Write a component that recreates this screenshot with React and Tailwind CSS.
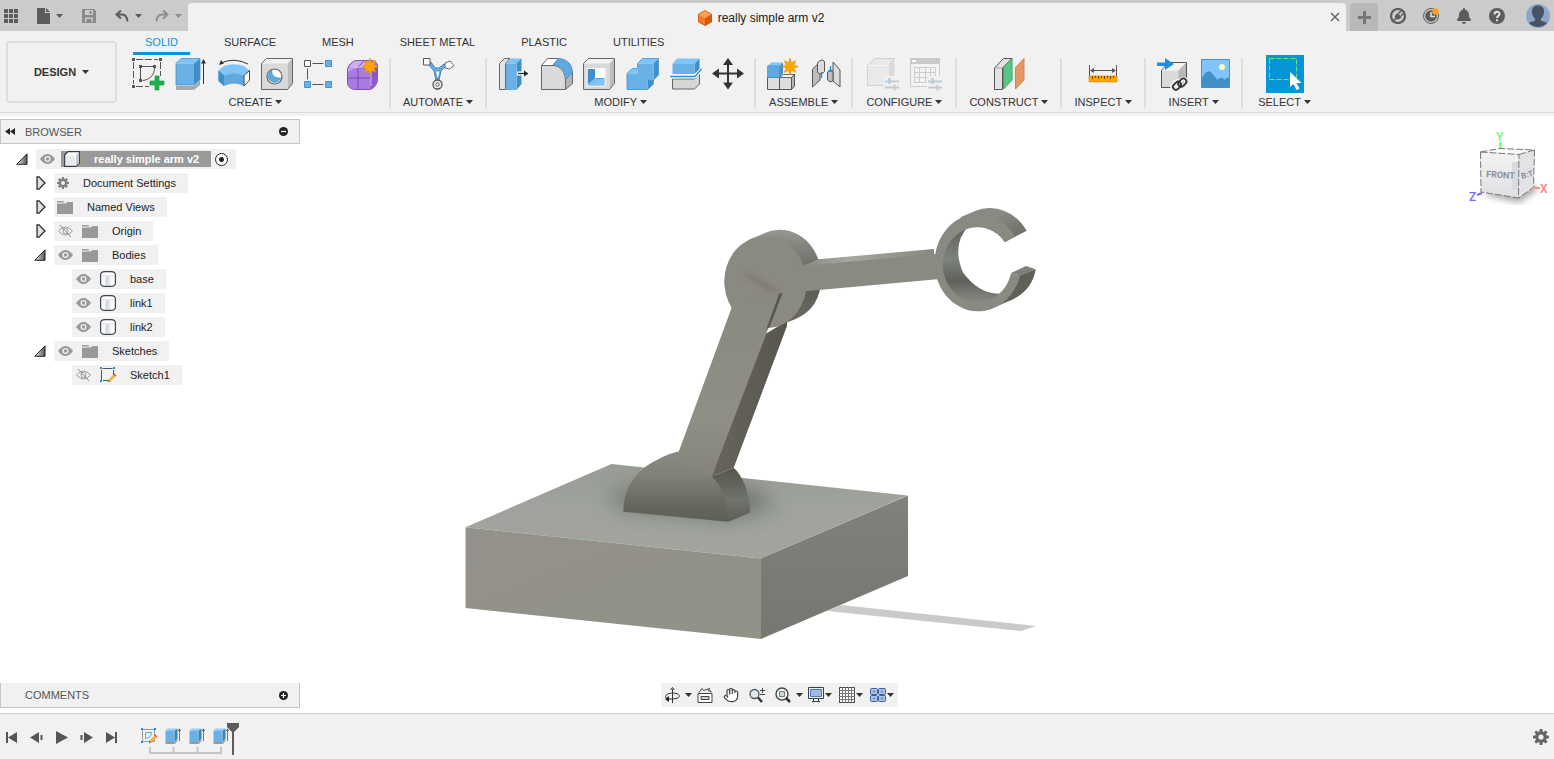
import React, { useState } from 'react';
import { FaBell } from 'react-icons/fa';
import { Hand } from 'lucide-react';

function Caret({ className = 'text-[#333]' }) {
  return (
    <svg className={`w-[7px] h-1 shrink-0 ${className}`} viewBox="0 0 7 4" aria-hidden="true">
      <path d="M0 0h7L3.5 4z" fill="currentColor" />
    </svg>
  );
}

function Gear({ className }) {
  return (
    <svg className={`shrink-0 ${className}`} viewBox="0 0 16 16" aria-hidden="true">
      <circle cx="8" cy="8" r="4.200" fill="none" stroke="currentColor" strokeWidth="3.200" />
      {[0, 45, 90, 135, 180, 225, 270, 315].map((a) => (
        <path key={a} d="M6.700 0h2.600l.5 3.500H6.200z" fill="currentColor" transform={`rotate(${a} 8 8)`} />
      ))}
    </svg>
  );
}

// 32x32 ribbon icon frame
function Icon({ children, className = 'w-8 h-8' }) {
  return (
    <svg className={`${className} shrink-0 overflow-visible`} viewBox="0 0 32 32" fill="none" aria-hidden="true">
      {children}
    </svg>
  );
}

function Star({ cx, cy, r = 8.5 }) {
  const points = [...Array(16)]
    .map((_, i) => {
      const radius = i % 2 === 0 ? r : r * 0.5;
      const angle = (i * Math.PI) / 8 - Math.PI / 2;
      return `${(cx + radius * Math.cos(angle)).toFixed(1)},${(cy + radius * Math.sin(angle)).toFixed(1)}`;
    })
    .join(' ');
  return <polygon points={points} fill="#ffa500" stroke="#e08e00" strokeWidth="0.5" />;
}

function Box({ stroke = '#666', front = '#d9d9d9', top = '#f2f2f2', side = '#bdbdbd' }) {
  return (
    <>
      <path d="M.5 5.5L5.5.5h26l-5 5z" fill={top} />
      <path d="M26.5 5.5l5-5v25l-5 6z" fill={side} />
      <path d="M.5 5.5h26v26H.5z" fill={front} />
      <path d="M.5 5.5L5.5.5h26v25l-5 6H.5z" stroke={stroke} />
    </>
  );
}

function SketchIcon() {
  return (
    <Icon>
      <path d="M4 1.5h22M1.5 4v22M28.5 4v14M4 28.5h13" stroke="#555" strokeDasharray="7 2" />
      <path d="M10 8.5h11M8.5 10v11M22.5 10c0 7-5 12-12 12.500" stroke="#555" />
      <path d="M0 0h3v3H0zM27 0h3v3h-3zM0 27h3v3H0zM7 7h3v3H7zM21 7h3v3h-3zM7 21h3v3H7z" fill="#555" />
      <path d="M23 18h4v5h5v4h-5v5h-4v-5h-5v-4h5z" fill="#21b14c" stroke="#128a36" strokeWidth=".6" />
    </Icon>
  );
}

function ExtrudeIcon() {
  return (
    <Icon>
      <path d="M1 28h18l6-6v5l-6 5H1z" fill="#a9a9a9" />
      <path d="M1 5.500L6 .5h19l-6 5z" fill="#7fc4fb" />
      <path d="M19 5.500l6-5v21l-6 6z" fill="#3f8fc9" />
      <path d="M1 5.500h18v21.500H1z" fill="#68b0e6" />
      <path d="M1 5.500L6 .5h19v21l-6 5.500H1z" stroke="#4593cc" strokeWidth=".8" />
      <path d="M28.500 3v23" stroke="#333" />
      <path d="M26 5.500L28.500 1 31 5.500z" fill="#333" />
    </Icon>
  );
}

function RevolveIcon() {
  return (
    <Icon>
      <path d="M.5 12.500l5.500-4.500q10-3.500 20 0l5.500 4.500-5.500 5q-10-5-20 0z" fill="#7fc4fb" />
      <path d="M.5 12.500l5.500 5q10-5 20 0v10.500q-10-5-20 0L.5 23z" fill="#5fa9e0" />
      <path d="M.5 12.500l5.500 5V28L.5 23z" fill="#3f8fc9" />
      <path d="M26 17.500l5.500-5V22L26 28z" fill="#fff" stroke="#444" />
      <path d="M3 5q13-6 27 1" stroke="#333" />
      <path d="M1 7l2-5 3 3.500z" fill="#333" />
    </Icon>
  );
}

function HoleIcon() {
  return (
    <Icon>
      <Box />
      <circle cx="13.500" cy="18.500" r="7.500" fill="#fff" stroke="#666" strokeWidth="1.200" />
      <path d="M11 12.500a6.200 6.200 0 1 0 8.500 7.500c-6 .5-9.500-3-8.500-7.500z" fill="#5fa9e0" stroke="#3f8fc9" strokeWidth=".8" />
    </Icon>
  );
}

function PatternIcon() {
  return (
    <Icon>
      <path d="M8.500 5.500h11M3.500 10.500v11M8.500 26.500h11" stroke="#555" />
      <path d="M.5 2.500h6v6h-6z" fill="#fff" stroke="#555" />
      <path d="M21.500 2.500h6v6h-6zM.5 23.500h6v6h-6zM21.500 23.500h6v6h-6z" fill="#68b0e6" stroke="#4593cc" />
    </Icon>
  );
}

function FormIcon() {
  return (
    <Icon>
      <path d="M.5 12c0-4 5-9.500 9-9.500h14c4 0 7 2 7 6v13c0 4-4 10-8 10H8c-4 0-7.500-3-7.500-7z" fill="#a97be0" stroke="#8152bd" />
      <path d="M1 12c1-4 5-9 9-9h14c-4 2-6 4-7 6H8c-3 0-5 1-7 3z" fill="#cdaef3" />
      <path d="M24 11l6-5v16c0 3-3 7-6 9z" fill="#8c5ac9" />
      <path d="M1 20h23l6-6M11 9v22M24 11v19M11 9l6-6" stroke="#7a48b5" />
      <path d="M1 13q5-4 10-4h10q3 0 3 3v16" stroke="#dcc6f8" />
      <Star cx={23} cy={8.5} />
    </Icon>
  );
}

function AutomateIcon() {
  return (
    <Icon>
      <path d="M7 7l5 6 2 9h3l2-9 5-5-2-2-5 4h-4L9 4z" fill="#68b0e6" stroke="#4080b0" />
      <path d="M13.500 13h4.500l-1.500 7h-1.500z" fill="#fff" stroke="#4080b0" strokeWidth=".7" />
      <path d="M1.500.5H8V7H1.500z" fill="#fff" stroke="#555" />
      <path d="M28 3l4 4.500-4.500 3.500-4.500-1V5z" fill="#fff" stroke="#666" />
      <circle cx="15.500" cy="26.500" r="4.500" fill="#eee" stroke="#555" strokeWidth="1.300" />
      <circle cx="15.500" cy="26.500" r="1.700" fill="#fff" stroke="#555" />
    </Icon>
  );
}

function PressPullIcon() {
  return (
    <Icon>
      <path d="M2.500 5.500l5-5H13L8.500 5.500v26h-6z" fill="#e4e4e4" stroke="#666" />
      <path d="M9 5.500L14 .5h10.500l-5 5z" fill="#7fc4fb" />
      <path d="M19.500 5.500l5-5V26l-5 6z" fill="#3f8fc9" />
      <path d="M9 5.500h10.500V32H9z" fill="#68b0e6" />
      <path d="M20 15.500h12" stroke="#fff" strokeWidth="4" />
      <path d="M21 15.500h7" stroke="#222" strokeWidth="1.300" />
      <path d="M27 12.500l4.500 3-4.500 3z" fill="#222" />
    </Icon>
  );
}

function FilletIcon() {
  return (
    <Icon>
      <path d="M1.500 7.500l6-7H19l-5.500 7z" fill="#fff" stroke="#666" />
      <path d="M1.500 7.500H13c8 0 12.500 8 12.500 15v9h-24z" fill="#dadada" stroke="#666" />
      <path d="M25.500 21l7-6.500v11l-7 6z" fill="#b5b5b5" stroke="#666" />
      <path d="M13 6.500l5.500-6c9 0 14 7 14 13.500l-6 7C26 13 20 6.500 13 6.500z" fill="#5fa9e0" stroke="#4593cc" strokeWidth=".8" />
    </Icon>
  );
}

function ShellIcon() {
  return (
    <Icon>
      <Box />
      <path d="M4.500 10.500h17v17h-17z" fill="#fff" />
      <path d="M4.500 11H12v9l-7.500 7z" fill="#3f8fc9" />
      <path d="M5 27.500l7-7h9.500v7z" fill="#7fc4fb" stroke="#4593cc" strokeWidth=".8" />
      <path d="M4 10.500h18V28H4z" stroke="#fff" />
    </Icon>
  );
}

function CombineIcon() {
  return (
    <Icon>
      <path d="M11.500 5.500l5-5h16l-5 5zM1 15.500l5-5h5.500v5z" fill="#7fc4fb" />
      <path d="M27.500 5.500l5-5V17l-5 5zM21.500 22h6v4l-6 6z" fill="#3f8fc9" />
      <path d="M11.500 5.500h16V22h-6v10H1V15.500h10.500z" fill="#68b0e6" />
      <path d="M11.500 5.500l5-5h16V17l-5 5v4l-6 5.500H1v-16l5-5h5.500z" stroke="#4593cc" strokeWidth=".8" />
    </Icon>
  );
}

function SplitIcon() {
  return (
    <Icon>
      <path d="M3.500 6L8 .5h22.500L25.500 6z" fill="#7fc4fb" />
      <path d="M25.500 6l5-5.500V11l-5 5z" fill="#3f8fc9" />
      <path d="M3.500 6h22v10h-22z" fill="#68b0e6" />
      <path d="M3.500 21h22l5-5v10l-5 5h-22z" fill="#d5d5d5" stroke="#666" />
      <path d="M0 18.500h26l6.500-7" stroke="#fff" strokeWidth="3.500" />
      <path d="M1 18.500h25l6.500-7.500" stroke="#1a8fe3" strokeWidth="1.300" />
    </Icon>
  );
}

function MoveIcon() {
  return (
    <Icon>
      <path d="M16 5v22M5 15.500h22" stroke="#333" strokeWidth="2" />
      <path d="M16 0l5 7H11zM16 31.500l5-7H11zM0 15.500l7-5v10zM32 15.500l-7-5v10z" fill="#333" />
    </Icon>
  );
}

function ComponentIcon() {
  return (
    <Icon>
      <path d="M1.500 19.500h12v12h-12zM13.500 19.500h12v12h-12z" fill="#dedede" stroke="#555" />
      <path d="M13.500 19.500l4-3h11l-3 3z" fill="#f3f3f3" stroke="#666" />
      <path d="M25.500 19.500l3-3V28l-3 3.500z" fill="#b5b5b5" stroke="#555" />
      <path d="M1.500 8l4-3.500h11.500L13.500 8z" fill="#7fc4fb" />
      <path d="M13.500 8L17 4.500v11l-3.500 4z" fill="#3f8fc9" />
      <path d="M1.500 8h12v11.500h-12z" fill="#5fa9e0" stroke="#4593cc" strokeWidth=".7" />
      <Star cx={24} cy={8.5} />
    </Icon>
  );
}

function JointIcon() {
  return (
    <Icon>
      <path d="M3.500 11L11 4v18l-7.500 7z" fill="#bdbdbd" stroke="#555" />
      <path d="M8.500 5q4-5 7-1.500v10q-3 4-7 1z" fill="#dcdcdc" stroke="#555" />
      <path d="M24 4l7 8v17l-7-6z" fill="#dcdcdc" stroke="#555" />
      <path d="M18.500 14q3-3 5.500 0v9q-3 2-5.500-1z" fill="#bdbdbd" stroke="#555" />
      <path d="M12.500 14v6M21.500 8v6M19.500 12.500h4" stroke="#1a8fe3" strokeWidth="1.300" />
    </Icon>
  );
}

function Sliders() {
  return (
    <>
      <path d="M17 18h15v14H17z" fill="#f1f1f1" />
      <path d="M18 23.500h14M18 29.500h14M27.500 26.500v6" stroke="#cacaca" strokeWidth="2" />
      <path d="M22.500 20v6" stroke="#a8cfec" strokeWidth="2.500" />
    </>
  );
}

function ConfigureIcon() {
  return (
    <Icon>
      <path d="M.5 7.500l7-7h20l-6 7v20H.5z" fill="#e9e9e9" stroke="#cfcfcf" />
      <path d="M.5 7.500h21v20" stroke="#f6f6f6" />
      <path d="M21.500 7.500l6-7v20l-6 7z" fill="#dadada" />
      <Sliders />
    </Icon>
  );
}

function ConfigTableIcon() {
  return (
    <Icon>
      <path d="M.5.5h29v28H.5z" fill="#f3f3f3" stroke="#cdcdcd" />
      <path d="M0 0h30v6H0z" fill="#c9c9c9" />
      <path d="M2 2h4v2H2z" fill="#fff" />
      <path d="M4.500 9.500h21v15h-21zM4.500 14.500h21M4.500 19.500h21M9.500 9.500v15M15.500 9.500v15M20.500 9.500v15" fill="none" stroke="#cdcdcd" />
      <Sliders />
    </Icon>
  );
}

function PlaneIcon() {
  return (
    <Icon>
      <path d="M1.500 10l9-9.500H19L9.500 10v21.500h-8z" fill="#e2e2e2" stroke="#555" />
      <path d="M1.500 10h8" stroke="#aaa" />
      <path d="M10.500 9.500l8.500-9V22l-8.500 9z" fill="#57c785" stroke="#36a864" />
      <path d="M22.500 9.500l8.500-9V22l-8.500 9z" fill="#e59a66" stroke="#cf8350" />
    </Icon>
  );
}

function MeasureIcon() {
  return (
    <Icon>
      <path d="M2.500 7v11M29.500 7v11M4 12.500h24" stroke="#555" />
      <path d="M3 12.500l4-2.500v5zM29 12.500l-4-2.500v5z" fill="#555" />
      <path d="M2 18h28v6H2z" fill="#ffa500" stroke="#d98c00" strokeWidth=".6" />
      <path d="M5.500 18v3M8.500 18v2M11.500 18v3M14.500 18v2M17.500 18v3M20.500 18v2M23.500 18v3M26.500 18v2" stroke="#6b4a00" />
    </Icon>
  );
}

function InsertIcon() {
  return (
    <Icon>
      <path d="M5.500 12.500l7-8h18v19l-6 6h-19z" fill="#dadada" stroke="#555" />
      <path d="M6 12.500l7-7.500h17l-7.500 7.500z" fill="#f4f4f4" />
      <path d="M22.500 12.500l7.500-7.500v20l-7.500 4z" fill="#b9b9b9" />
      <path d="M1 4.500h8V0l9 6-9 6V8H1z" fill="#1a8fe3" />
      <g stroke="#f1f1f1" strokeWidth="4.500">
        <rect x="16" y="23.500" width="9" height="6" rx="3" transform="rotate(-45 21 27)" />
        <rect x="22" y="22.500" width="9" height="6" rx="3" transform="rotate(-45 26 25)" />
      </g>
      <g stroke="#333" strokeWidth="1.800">
        <rect x="16" y="24.500" width="9" height="6" rx="3" transform="rotate(-45 21 27)" />
        <rect x="22" y="22" width="9" height="6" rx="3" transform="rotate(-45 26 25)" />
      </g>
    </Icon>
  );
}

function CanvasIcon() {
  return (
    <Icon>
      <path d="M2.500 1.500h28v28h-28z" fill="#7fc4fb" />
      <circle cx="23" cy="9" r="3" fill="#fdf9c8" />
      <path d="M2.500 21c4-8 8-10 11-5l5 6c3-3 5-3 7 0 2-3 4-3 5-2v9.500h-28z" fill="#3f8fc9" />
      <path d="M2.500 1.500h28v28h-28z" stroke="#4593cc" />
    </Icon>
  );
}

function SelectIcon() {
  return (
    <svg className="w-[38px] h-[38px]" viewBox="0 0 38 38" fill="none" aria-hidden="true">
      <path d="M0 0h38v38H0z" fill="#0696d7" />
      <path d="M3.500 3.500h27v21h-27z" stroke="#6fe07a" strokeDasharray="5 2" />
      <path d="M24 17v15l3.500-3 3 6 3-1.500-3-5.500h5z" fill="#fff" />
    </svg>
  );
}

const groups = [
  {
    label: 'CREATE',
    tools: [
      ['Create Sketch', SketchIcon],
      ['Extrude', ExtrudeIcon],
      ['Revolve', RevolveIcon],
      ['Hole', HoleIcon],
      ['Rectangular Pattern', PatternIcon],
      ['Create Form', FormIcon],
    ],
  },
  { label: 'AUTOMATE', tools: [['Automated Modeling', AutomateIcon]] },
  {
    label: 'MODIFY',
    tools: [
      ['Press Pull', PressPullIcon],
      ['Fillet', FilletIcon],
      ['Shell', ShellIcon],
      ['Combine', CombineIcon],
      ['Split Body', SplitIcon],
      ['Move/Copy', MoveIcon],
    ],
  },
  { label: 'ASSEMBLE', tools: [['New Component', ComponentIcon], ['Joint', JointIcon]] },
  { label: 'CONFIGURE', tools: [['Configure', ConfigureIcon], ['Configuration Table', ConfigTableIcon]] },
  { label: 'CONSTRUCT', tools: [['Offset Plane', PlaneIcon]] },
  { label: 'INSPECT', tools: [['Measure', MeasureIcon]] },
  { label: 'INSERT', tools: [['Insert Derive', InsertIcon], ['Canvas', CanvasIcon]] },
  { label: 'SELECT', tools: [['Select', SelectIcon]] },
];

const tabs = ['SOLID', 'SURFACE', 'MESH', 'SHEET METAL', 'PLASTIC', 'UTILITIES'];

function TopBar() {
  return (
    <header className="flex h-[31px] bg-[#cbcbcb] text-[#5c5c5c]">
      <div className="flex w-[188px] shrink-0 items-center">
        <button aria-label="Data panel" className="ml-1">
          <svg className="w-[14px] h-[14px]" viewBox="0 0 14 14" fill="currentColor">
            <path d="M0 0h4v4H0zM5 0h4v4H5zM10 0h4v4h-4zM0 5h4v4H0zM5 5h4v4H5zM10 5h4v4h-4zM0 10h4v4H0zM5 10h4v4H5zM10 10h4v4h-4z" />
          </svg>
        </button>
        <button aria-label="File" className="ml-[19px] flex items-center gap-[6px]">
          <svg className="w-[13px] h-4" viewBox="0 0 13 16" fill="currentColor">
            <path d="M0 0h8v5h5v11H0zM9 0l4 4H9z" />
          </svg>
          <Caret className="text-[#5c5c5c]" />
        </button>
        <button aria-label="Save" className="ml-[19px] text-[#8a8a8a]">
          <svg className="w-[14px] h-[14px]" viewBox="0 0 14 14" fill="currentColor">
            <path fillRule="evenodd" d="M0 0h12l2 2v12H0zM3 1v5h8V1zM3 8.500V13h8V8.500zM7.500 2h2v3h-2zM4.500 10h5v3h-5z" />
          </svg>
        </button>
        <button aria-label="Undo" className="ml-[19px] flex items-center gap-[6px]">
          <svg className="w-[14px] h-3" viewBox="0 0 14 12" fill="none" stroke="currentColor" strokeWidth="2">
            <path d="M6 .5L1.500 4.500 6 8.500M2 4.500h5q5 0 5.500 7" />
          </svg>
          <Caret className="text-[#5c5c5c]" />
        </button>
        <button aria-label="Redo" className="ml-[13px] flex items-center gap-[6px] text-[#8f8f8f]">
          <svg className="w-[14px] h-3" viewBox="0 0 14 12" fill="none" stroke="currentColor" strokeWidth="2">
            <path d="M8 .5l4.500 4L8 8.500M12 4.500H7q-5 0-5.500 7" />
          </svg>
          <Caret className="text-[#8f8f8f]" />
        </button>
      </div>
      <div className="mt-[3px] flex flex-1 items-center rounded-t bg-[#f1f1f1] pr-[6px]">
        <div className="flex flex-1 items-center justify-center gap-[6px] pl-1 pt-[2px] text-xs text-[#222]">
          <svg className="w-[14px] h-4" viewBox="0 0 14 16" aria-hidden="true">
            <path d="M7 0l7 4-7 4-7-4z" fill="#ffa052" />
            <path d="M0 4l7 4v8l-7-4z" fill="#f47a20" />
            <path d="M14 4L7 8v8l7-4z" fill="#d9590b" />
            <path d="M7 .5l6.500 3.700v7.600L7 15.500.5 11.800V4.200z" fill="none" stroke="#c9560d" strokeWidth=".7" />
          </svg>
          <span>really simple arm v2</span>
        </div>
        <button aria-label="Close tab" className="text-[#666]">
          <svg className="w-[10px] h-[10px]" viewBox="0 0 10 10" fill="none" stroke="currentColor" strokeWidth="1.500">
            <path d="M1 1l8 8M9 1L1 9" />
          </svg>
        </button>
      </div>
      <div className="flex w-[208px] shrink-0 items-center pl-1">
        <button aria-label="New design" className="mt-[3px] flex h-7 w-7 items-center justify-center rounded-t bg-[#b8b8b8] text-[#777]">
          <svg className="w-[13px] h-[13px]" viewBox="0 0 13 13" stroke="currentColor" strokeWidth="3">
            <path d="M6.500 0v13M0 6.500h13" />
          </svg>
        </button>
        <button aria-label="Extensions" className="ml-3">
          <svg className="w-4 h-4" viewBox="0 0 16 16" fill="none">
            <circle cx="8" cy="8" r="7" stroke="#5c5c5c" strokeWidth="2.200" />
            <path d="M5.500 7l2-2 4 4-2 2q-2.500 1-4-.5-1.500-2 0-3.500z" fill="#5c5c5c" />
            <path d="M8.500 5.500l2.500-2.500M11 8l2.500-2.500M6 10.500l-4 3.500" stroke="#5c5c5c" strokeWidth="1.600" />
          </svg>
        </button>
        <button aria-label="Job status" className="ml-[17px]">
          <svg className="w-4 h-4 overflow-visible" viewBox="0 0 16 16" fill="none">
            <circle cx="8" cy="8" r="7.500" stroke="#5c5c5c" />
            <circle cx="8" cy="8" r="5.800" fill="#5c5c5c" />
            <path d="M8 4v4.500h4" stroke="#e0e0e0" strokeWidth="1.500" />
            <circle cx="12.500" cy="3.500" r="3.200" fill="#ffa01e" />
          </svg>
        </button>
        <button aria-label="Notifications" className="ml-[17px] flex w-4 justify-center">
          <FaBell className="w-[14px] h-4" />
        </button>
        <button aria-label="Help" className="ml-[17px]">
          <svg className="w-4 h-4" viewBox="0 0 16 16" fill="none">
            <circle cx="8" cy="8" r="8" fill="#5c5c5c" />
            <path d="M5.500 6.500c0-3.500 5-3.500 5-.5 0 2-2.500 2-2.500 4M8 11.200v2" stroke="#e3e3e3" strokeWidth="1.900" />
          </svg>
        </button>
        <button aria-label="Account" className="ml-[21px]">
          <svg className="w-6 h-6" viewBox="0 0 24 24">
            <circle cx="12" cy="12" r="12" fill="#8ea6c8" />
            <path d="M12 1.500c4.500 0 6.500 3 6 7-.3 3-1.500 5-3 6v2c2 1 4.500 1.500 6 2.500A12 12 0 0 1 3 19c1.500-1 4-1.500 6-2.500v-2c-1.500-1-2.700-3-3-6-.5-4 1.500-7 6-7z" fill="#465367" />
          </svg>
        </button>
      </div>
    </header>
  );
}

function groupPadding(group, isLast) {
  if (isLast) return 'px-3';
  return group.tools.length === 1 ? 'border-r-2 px-[9px]' : 'border-r-2 px-[10px]';
}

function Ribbon() {
  const [activeTab, setActiveTab] = useState('SOLID');

  return (
    <div className="border-b-[3px] border-[#f1f1f1] bg-[#f1f1f1]">
      <div className="flex items-start border-b border-[#d9d9d9] text-[11px] leading-4 text-[#333]">
        <button className="ml-[6px] mt-[10px] flex h-[62px] w-[111px] shrink-0 items-center justify-center gap-[6px] rounded border-2 border-[#dcdcdc] font-bold">
          DESIGN <Caret />
        </button>
        <div className="ml-[5px]">
          <div className="flex h-6 gap-[22px] pl-[11px]">
            {tabs.map((tab) => (
              <button
                key={tab}
                onClick={() => setActiveTab(tab)}
                className={`flex h-6 items-center border-b-[3px] px-3 ${
                  activeTab === tab ? 'border-[#0696d7] text-[#0696d7]' : 'border-transparent'
                }`}
              >
                {tab}
              </button>
            ))}
          </div>
          <div className="flex h-[57px] items-start">
            {groups.map((group, i) => (
              <div
                key={group.label}
                className={`mt-[3px] flex h-[50px] flex-col items-center border-[#dedede] ${groupPadding(group, i === groups.length - 1)}`}
              >
                <div className="flex h-8 items-center gap-[11px]">
                  {group.tools.map(([name, ToolIcon]) => (
                    <button key={name} aria-label={name} title={name}>
                      <ToolIcon />
                    </button>
                  ))}
                </div>
                <button className="mt-1 flex items-center gap-[3px] whitespace-nowrap px-[3px]">
                  {group.label} <Caret />
                </button>
              </div>
            ))}
          </div>
        </div>
      </div>
    </div>
  );
}

function Eye({ hidden = false }) {
  return (
    <svg className="w-[15px] h-3 shrink-0" viewBox="0 0 15 12" fill="none" aria-hidden="true">
      {hidden ? (
        <>
          <path d="M.5 6Q7.500-2 14.500 6 7.500 14 .5 6z" stroke="#999" />
          <circle cx="7.500" cy="6" r="2.500" stroke="#999" />
          <path d="M2 0l11 12" stroke="#888" />
        </>
      ) : (
        <>
          <path d="M0 6Q7.500-4 15 6 7.500 16 0 6z" fill="#999" />
          <circle cx="7.500" cy="6" r="3" fill="#f1f1f1" />
          <circle cx="7.500" cy="6" r="1.700" fill="#999" />
        </>
      )}
    </svg>
  );
}

function Folder() {
  return (
    <svg className="w-4 h-[13px] shrink-0" viewBox="0 0 16 13" aria-hidden="true">
      <path d="M0 0h6l2 1.500H0zM0 2.500h9l1.500-1.500H16v12H0z" fill="#999" />
    </svg>
  );
}

function Body() {
  return (
    <svg className="w-4 h-4 shrink-0" viewBox="0 0 16 16" aria-hidden="true">
      <defs>
        <linearGradient id="cyl">
          <stop offset="0" stopColor="#fff" />
          <stop offset=".35" stopColor="#cfd2da" />
          <stop offset="1" stopColor="#fff" />
        </linearGradient>
      </defs>
      <path d="M.6 3.500Q1 .6 5 .6h6q4 0 4.400 2.900v9q-.4 2.900-4.400 2.900H5q-4 0-4.400-2.900z" fill="#fff" stroke="#3c4254" strokeWidth="1.200" />
      <path d="M4 6h8v8H4z" fill="url(#cyl)" />
      <path d="M1.500 4q6.500 3 13 0" fill="none" stroke="#d5d7dd" />
    </svg>
  );
}

function Pencil() {
  return (
    <>
      <path d="M8.500 12.500l5-5 2 2-5 5z" fill="#f9b233" />
      <path d="M13.500 7.500l1-1 2 2-1 1z" fill="#e84b3c" />
      <path d="M8.500 12.500l2 2-2.700.8z" fill="#777" />
    </>
  );
}

function SketchItem() {
  return (
    <svg className="w-4 h-4 shrink-0 overflow-visible" viewBox="0 0 16 16" fill="none" aria-hidden="true">
      <path d="M2.500 1.500h10M1.500 3v10M13.500 3v5M3 13.500h5" stroke="#555" />
      <path d="M0 0h2v2H0zM13 0h2v2h-2zM0 13h2v2H0z" fill="#1a8fe3" />
      <Pencil />
    </svg>
  );
}

function RootCube() {
  return (
    <svg className="w-4 h-4 shrink-0" viewBox="0 0 16 16" aria-hidden="true">
      <path d="M.7 4L4 .7h11.300V12L12 15.300H.7z" fill="#fff" stroke="#333a48" strokeWidth="1.200" />
      <path d="M12 4l3-3v11l-3 3z" fill="#c3c6cf" />
      <path d="M2 5h9v9H2z" fill="#e9eaee" />
    </svg>
  );
}

function Arrow({ state }) {
  if (state === 'open') {
    return (
      <svg className="w-3 h-3" viewBox="0 0 12 12" aria-hidden="true">
        <defs>
          <linearGradient id="tri">
            <stop offset="0" stopColor="#eee" />
            <stop offset="1" stopColor="#555" />
          </linearGradient>
        </defs>
        <path d="M11 .8v10.500H.8z" fill="url(#tri)" stroke="#222" />
      </svg>
    );
  }
  return (
    <svg className="w-[10px] h-[14px]" viewBox="0 0 10 14" aria-hidden="true">
      <path d="M1 .8h2L9 7l-6 6.200H1z" fill="#ddd" stroke="#222" strokeWidth="1.200" />
    </svg>
  );
}

const indents = ['pl-[14px]', 'pl-8', 'pl-[50px]'];

const tree = [
  { name: 'Document Settings', level: 1, arrow: 'closed', icon: <Gear className="w-3 h-3 text-[#808080]" /> },
  { name: 'Named Views', level: 1, arrow: 'closed', icon: <Folder /> },
  { name: 'Origin', level: 1, arrow: 'closed', eye: 'hidden', icon: <Folder /> },
  { name: 'Bodies', level: 1, arrow: 'open', eye: 'shown', icon: <Folder /> },
  { name: 'base', level: 2, eye: 'shown', icon: <Body /> },
  { name: 'link1', level: 2, eye: 'shown', icon: <Body /> },
  { name: 'link2', level: 2, eye: 'shown', icon: <Body /> },
  { name: 'Sketches', level: 1, arrow: 'open', eye: 'shown', icon: <Folder /> },
  { name: 'Sketch1', level: 2, eye: 'hidden', icon: <SketchItem /> },
];

function ArrowSlot({ state }) {
  if (!state) return <span className="w-[22px] shrink-0" />;
  return (
    <button
      aria-label={state === 'open' ? 'Collapse' : 'Expand'}
      className={`flex w-[22px] shrink-0 ${state === 'open' ? 'pl-[2px]' : 'pl-1'}`}
    >
      <Arrow state={state} />
    </button>
  );
}

function Browser() {
  return (
    <aside className="relative w-[300px] text-[11px] leading-4 text-[#222]">
      <div className="mt-[3px] flex h-[25px] items-center border border-[#c6c6c6] bg-[#f1f1f1] pl-1 pr-[11px]">
        <button aria-label="Collapse browser">
          <svg className="w-[10px] h-[7px]" viewBox="0 0 10 7" fill="#222">
            <path d="M5 0v7L0 3.500zM10 0v7L5 3.500z" />
          </svg>
        </button>
        <h2 className="ml-[10px] flex-1 text-[#555]">BROWSER</h2>
        <button aria-label="Minimize browser">
          <svg className="w-[9px] h-[9px]" viewBox="0 0 9 9">
            <circle cx="4.500" cy="4.500" r="4.500" fill="#222" />
            <path d="M2 4.500h5" stroke="#fff" strokeWidth="1.300" />
          </svg>
        </button>
      </div>
      <ul className="mt-[3px]">
        <li className="flex h-6 items-center pl-[14px]">
          <ArrowSlot state="open" />
          <div className="flex h-5 items-center bg-[#f1f1f1] pl-1 pr-2">
            <Eye />
            <div className="ml-[6px] flex h-4 items-center gap-[14px] bg-[#999] pl-[3px] pr-3 font-bold text-white">
              <RootCube />
              really simple arm v2
            </div>
            <input type="radio" name="active" defaultChecked aria-label="Activate component" className="ml-1 h-[13px] w-[13px] appearance-none rounded-full border border-[#222] bg-[radial-gradient(circle,#222_2px,#fff_3px)]" />
          </div>
        </li>
        {tree.map((item) => (
          <li key={item.name} className={`flex h-6 items-center ${indents[item.level]}`}>
            <ArrowSlot state={item.arrow} />
            <div className={`flex h-5 items-center whitespace-nowrap bg-[#f1f1f1] pr-3 ${item.eye ? 'pl-1' : 'pl-[3px]'}`}>
              {item.eye && (
                <button aria-label={`Toggle ${item.name}`} className="mr-[9px]">
                  <Eye hidden={item.eye === 'hidden'} />
                </button>
              )}
              {item.icon}
              <span className="ml-[14px]">{item.name}</span>
            </div>
          </li>
        ))}
      </ul>
    </aside>
  );
}

function ViewCube() {
  return (
    <svg className="relative w-[104px] h-[100px]" viewBox="1450 120 104 100" fontFamily="Roboto, sans-serif" role="img" aria-label="View cube">
      <defs>
        <filter id="cubeBlur"><feGaussianBlur stdDeviation="3" /></filter>
        <linearGradient id="cubeFront" x1="0" y1="0" x2="0" y2="1">
          <stop offset="0" stopColor="#f3f3f3" />
          <stop offset="1" stopColor="#dedfe1" />
        </linearGradient>
      </defs>
      <path d="M1484 195l35 8 19-13-6-6-40 5z" fill="#777" opacity=".6" filter="url(#cubeBlur)" />
      <path d="M1480.500 152l19.500-3.500 34.500 1.500-15.500 4.500z" fill="#fafafa" />
      <path d="M1480.500 152l38.500 2.500-.5 43.500-37.500-6z" fill="url(#cubeFront)" />
      <path d="M1519 154.500l15.500-4.500-1 37.500-15 10.500z" fill="#e2e3e5" />
      <path d="M1512 162h7v28h-7z" fill="#d8dae0" />
      <g fill="none" stroke="#777" strokeDasharray="7 2">
        <path d="M1480.500 152l38.500 2.500-.5 43.500-37.500-6z" />
        <path d="M1480.500 152l19.500-3.500 34.500 1.500-1 37.500-15 10.500M1534.500 150l-15.500 4.500" />
      </g>
      <text x="1486" y="177" fontSize="9" fontWeight="700" fill="#8d9097" transform="rotate(4 1486 177)">FRONT</text>
      <text x="1522" y="179" fontSize="8" fontWeight="700" fill="#8d9097" transform="rotate(-16 1522 179)">B:T</text>
      <g strokeWidth="2">
        <path d="M1500.500 142v6" stroke="#5dfb5d" />
        <path d="M1533 187.500l7 .8" stroke="#fb8b8b" />
        <path d="M1477 195l5-2" stroke="#6a6afb" />
      </g>
      <text x="1496" y="141" fontSize="12" fontWeight="500" fill="#6dfa6d">Y</text>
      <text x="1540" y="193" fontSize="12" fontWeight="500" fill="#fb8080">X</text>
      <text x="1469" y="201" fontSize="12" fontWeight="500" fill="#7070fb">Z</text>
    </svg>
  );
}

function Model() {
  return (
    <svg className="absolute inset-0 h-full w-full" viewBox="0 116 1554 597" role="img" aria-label="Robot arm model">
      <defs>
        <linearGradient id="front" x1="0" y1="0" x2="1" y2="1">
          <stop offset="0" stopColor="#93918b" />
          <stop offset="1" stopColor="#929288" />
        </linearGradient>
        <linearGradient id="right" x1="0" y1="0" x2="0" y2="1">
          <stop offset="0" stopColor="#80817b" />
          <stop offset="1" stopColor="#767770" />
        </linearGradient>
        <linearGradient id="top" x1="0" y1="0" x2="0" y2="1">
          <stop offset="0" stopColor="#969b93" />
          <stop offset=".4" stopColor="#9fa39c" />
          <stop offset="1" stopColor="#a2a59d" />
        </linearGradient>
        <linearGradient id="dome" x1="0" y1="0" x2="0" y2="1">
          <stop offset="0" stopColor="#8b8b82" />
          <stop offset=".35" stopColor="#828178" />
          <stop offset=".75" stopColor="#686860" />
          <stop offset="1" stopColor="#5e5e57" />
        </linearGradient>
        <linearGradient id="domeSide" x1="0" y1="0" x2="0" y2="1">
          <stop offset="0" stopColor="#55554d" />
          <stop offset=".6" stopColor="#6f746d" />
          <stop offset="1" stopColor="#5c5d56" />
        </linearGradient>
        <linearGradient id="armSide" x1="0" y1="0" x2="1" y2="0">
          <stop offset="0" stopColor="#67655d" />
          <stop offset="1" stopColor="#57564e" />
        </linearGradient>
        <linearGradient id="arm" x1="0" y1="0" x2="0" y2="1">
          <stop offset="0" stopColor="#8a8981" />
          <stop offset=".7" stopColor="#8f8f85" />
          <stop offset="1" stopColor="#85847b" />
        </linearGradient>
        <linearGradient id="diskSide" x1="0" y1="0" x2="0" y2="1">
          <stop offset="0" stopColor="#959891" />
          <stop offset=".3" stopColor="#757870" />
          <stop offset=".55" stopColor="#5b5b54" />
          <stop offset="1" stopColor="#6c6a63" />
        </linearGradient>
        <linearGradient id="ringSide" x1="0" y1="0" x2="1" y2="1">
          <stop offset="0" stopColor="#8b8c85" />
          <stop offset=".4" stopColor="#868a83" />
          <stop offset="1" stopColor="#676860" />
        </linearGradient>
        <linearGradient id="wall" x1="0" y1="0" x2="0" y2="1">
          <stop offset="0" stopColor="#5d5d56" />
          <stop offset=".45" stopColor="#7c827c" />
          <stop offset=".7" stopColor="#61605a" />
          <stop offset="1" stopColor="#8d918b" />
        </linearGradient>
        <linearGradient id="linkTop">
          <stop offset="0" stopColor="#868a82" />
          <stop offset=".35" stopColor="#a3a8a0" />
          <stop offset="1" stopColor="#868982" />
        </linearGradient>
        <filter id="soft" x="-50%" y="-50%" width="200%" height="200%"><feGaussianBlur stdDeviation="10" /></filter>
        <filter id="soft2" x="-50%" y="-50%" width="200%" height="200%"><feGaussianBlur stdDeviation="2" /></filter>
        <clipPath id="topClip"><path d="M465.500 527.300L611.500 464l296 31.500L761 558.500z" /></clipPath>
      </defs>

      {/* ground shadow */}
      <path d="M827 611l14-6 195 21-15 5z" fill="#cacaca" />

      {/* base */}
      <path d="M465.500 527.300L611.500 464l296 31.500L761 558.500z" fill="url(#top)" />
      <g clipPath="url(#topClip)">
        <path d="M606 497q90-26 150-4l22 11-48 14-105-10z" fill="#585c55" opacity=".7" filter="url(#soft)" />
      </g>
      <path d="M465.500 527.300L761 558.500V639l-295.500-31z" fill="url(#front)" />
      <path d="M761 558.500l147-63V576l-147 63z" fill="url(#right)" />

      {/* link1 foot */}
      <path d="M645 467q18-12 33-15.500l3 8-18 3z" fill="#858983" />
      <path d="M711.700 476.700l22-9c10 9 16 26 16.300 45l-21.700 9c0-20-7-36-16.600-45z" fill="url(#domeSide)" />
      <path d="M623.300 511.700C624 478 648 457 676 458.500l3-8 54 8-21.300 18.200c9.600 9 16.600 25 16.600 45z" fill="url(#dome)" />

      {/* joint disk */}
      <path d="M751 239l14-6a41 46 0 0 1 56 43q1 32-26.500 43.500L780 325z" fill="url(#diskSide)" />
      <path d="M762 336l25-15v5l-53.300 141.700-22 9z" fill="url(#armSide)" />
      <ellipse cx="765.500" cy="282.200" rx="41.200" ry="46" fill="#8b8a82" transform="rotate(-4 765.500 282.200)" />

      {/* link2 */}
      <path d="M802 266.500l16.300-7.200L934 249v6z" fill="url(#linkTop)" />
      <path d="M790 267l14.300-1.300L940 253.500V279l-132 12-18 2z" fill="#8b8a82" />

      {/* link1 */}
      <path d="M732 306.700l-4-12 27-13 26.700 11.600-70 183.400-34.200-21.700z" fill="url(#arm)" />
      <path d="M726 288q2 11 6 18.700l20-6 10-22z" fill="#8b8a82" />
      <path d="M744 271q18 6 36 21l-8 1q-18-8-28-20z" fill="#73716a" opacity=".5" filter="url(#soft2)" />
      <path d="M779 294l3.500-1-13 34-3 2z" fill="#56554e" />

      {/* gripper */}
      <path d="M961 217l14-6a43.500 48.700 0 0 1 51.700 19.700l-22 11.600a34.500 37.500 0 0 0-47-15z" fill="url(#ringSide)" />
      <path d="M1018 275.700l17.700-6.400q-4 24-29.700 33l-17 7.500-2-6q23-6 31-28z" fill="#605f58" />
      <path d="M1011 273l15-7 9.700 3.300-15.700 6.400z" fill="#7e817a" />
      <path d="M971 221q-33 6-33 41 4 44 40 44 16-2 24-12.500-22 2-39-21-12-28 6-47z" fill="url(#wall)" />
      <path
        d="M1014.500 236A43.500 48.700 0 1 0 1020 275.700L1011 273A34.500 37.500 0 1 1 1005 242.300z"
        fill="#8b8a82"
      />
    </svg>
  );
}

function OrbitIcon() {
  return (
    <svg className="w-4 h-4" viewBox="0 0 16 16" fill="none" stroke="#333">
      <path d="M8.500 2v14M6.500 3l2-2.500 2 2.500" />
      <path d="M3 11.500C-1 9 4 6 8.500 6s9 2 6 4.500q-2 1.500-6 1.500H3" />
      <path d="M5 9v6l-4-3z" fill="#222" stroke="none" />
    </svg>
  );
}

function LookIcon() {
  return (
    <svg className="w-4 h-4" viewBox="0 0 16 16" fill="none" stroke="#444">
      <path d="M1 6.500h14v9H1z" fill="#fff" />
      <path d="M4 9.500h8v3H4z" fill="#c9d3d3" />
      <path d="M2 5.500l3-4 1.500 2 6-2-1 2.500H14v1.500" />
    </svg>
  );
}

function ZoomIcon() {
  return (
    <svg className="w-4 h-4 overflow-visible" viewBox="0 0 16 16" fill="none">
      <circle cx="5.500" cy="7" r="4.500" fill="#dce9ee" stroke="#555" strokeWidth="1.300" />
      <path d="M9 10.500l4 4.500" stroke="#333" strokeWidth="2.500" />
      <path d="M13.500 1v5M11 3.500h5M11 7.500h5" stroke="#444" />
    </svg>
  );
}

function FitIcon() {
  return (
    <svg className="w-4 h-4" viewBox="0 0 16 16" fill="none">
      <circle cx="7" cy="7" r="6" fill="#f7f7f7" stroke="#444" strokeWidth="1.400" />
      <path d="M4.500 4.500h5v5h-5z" fill="#c6dada" stroke="#6d7c7c" />
      <path d="M11 11l4 4" stroke="#333" strokeWidth="2.500" />
    </svg>
  );
}

function DisplayIcon() {
  return (
    <svg className="w-4 h-4" viewBox="0 0 16 16" fill="none" stroke="#39404d">
      <path d="M.5.5h15v11H.5z" fill="#eef1f5" />
      <path d="M2.500 2.500h11v7h-11z" fill="#9dbce6" stroke="#5377b0" />
      <path d="M5.500 12v2M10.500 12v2M4 14.500h8" />
    </svg>
  );
}

function GridIcon() {
  return (
    <svg className="w-4 h-4" viewBox="0 0 16 16" fill="none" stroke="#777">
      <path d="M.5.500h15v15H.5z" fill="#f6f6f6" stroke="#444" />
      <path d="M3.500 0v16M6.500 0v16M9.500 0v16M12.500 0v16M0 3.500h16M0 6.500h16M0 9.500h16M0 12.500h16" />
    </svg>
  );
}

function ViewportsIcon() {
  return (
    <svg className="w-4 h-4" viewBox="0 0 16 16" stroke="#3d5f96" fill="#a9c4ea">
      <rect x=".5" y="1.500" width="7" height="6" rx="1" />
      <rect x="8.500" y="1.500" width="7" height="6" rx="1" />
      <rect x=".5" y="8.500" width="7" height="6" rx="1" />
      <rect x="8.500" y="8.500" width="7" height="6" rx="1" />
      <path d="M3 4h2v1H3zM11 4h2v1h-2zM3 11h2v1H3zM11 11h2v1h-2z" strokeWidth=".4" />
    </svg>
  );
}

function NavBar() {
  return (
    <nav className="flex h-6 items-center bg-[#f1f1f1] pl-[3px] pr-1">
      <button aria-label="Orbit" className="flex items-center gap-[5px]"><OrbitIcon /><Caret /></button>
      <button aria-label="Look at" className="ml-[5px]"><LookIcon /></button>
      <button aria-label="Pan" className="ml-[10px]">
        <Hand className="w-4 h-4 text-[#444]" fill="#fff" strokeWidth={1.8} />
      </button>
      <button aria-label="Zoom" className="ml-[10px]"><ZoomIcon /></button>
      <button aria-label="Fit" className="ml-[10px] flex items-center gap-[5px]"><FitIcon /><Caret /></button>
      <button aria-label="Display settings" className="ml-[5px] flex items-center gap-[1px]"><DisplayIcon /><Caret /></button>
      <button aria-label="Grid and snaps" className="ml-[7px] flex items-center gap-[1px]"><GridIcon /><Caret /></button>
      <button aria-label="Viewports" className="ml-[7px] flex items-center gap-[1px]"><ViewportsIcon /><Caret /></button>
    </nav>
  );
}

const playback = [
  ['Go to start', 'M1 1h2v11H1zM12 1v11L3 6.500z'],
  ['Step back', 'M9 1v11L0 6.500zM10.500 4h2v5h-2z'],
  ['Play', 'M1 0l12 6.500L1 13z'],
  ['Step forward', 'M4 1v11l9-5.500zM.5 4h2v5h-2z'],
  ['Go to end', 'M1 1v11l9-5.500zM10 1h2v11h-2z'],
];

function Timeline() {
  return (
    <footer className="flex h-[46px] items-start border-t border-[#cfcfcf] bg-[#f1f1f1] pl-[5px] pr-[5px]">
      <div className="flex gap-3 pt-[17px]">
        {playback.map(([name, d]) => (
          <button key={name} aria-label={name}>
            <svg className="w-[13px] h-[13px]" viewBox="0 0 13 13" fill="#555">
              <path d={d} />
            </svg>
          </button>
        ))}
      </div>
      <div className="relative ml-[23px] flex-1 pt-[14px]">
        <div className="flex gap-2">
          <button aria-label="Sketch1">
            <svg className="w-4 h-4" viewBox="0 0 16 16" fill="none">
              <path d="M1.500 1.500h12v12h-12z" stroke="#999" />
              <path d="M4.500 4.500h6q0 5-6 6z" stroke="#5fa9e0" />
              <path d="M0 0h2v2H0zM13 0h2v2h-2zM0 13h2v2H0z" fill="#1a8fe3" />
              <Pencil />
            </svg>
          </button>
          {['base', 'link1', 'link2'].map((name) => (
            <button key={name} aria-label={`Extrude ${name}`}>
              <svg className="w-4 h-4" viewBox="0 0 16 16">
                <path d="M.5 14h9l3-3v2l-3 3h-9z" fill="#9a9a9a" />
                <path d="M.5 3L3 .5h9.500L9.500 3z" fill="#8fccfb" />
                <path d="M9.500 3l3-2.500v10l-3 3.500z" fill="#3483bd" />
                <path d="M.5 3h9v11h-9z" fill="#68b0e6" />
                <path d="M14.500 1v12" stroke="#777" />
                <path d="M13 3l1.500-2.500L16 3z" fill="#444" />
              </svg>
            </button>
          ))}
        </div>
        <svg className="mt-[3px] ml-2 h-[7px] w-[73px]" viewBox="0 0 73 7" fill="none" stroke="#c6c6c6" strokeWidth="2" aria-hidden="true">
          <path d="M1 0v6h71V0M24.500 0v6M48.500 0v6" />
        </svg>
        <svg className="absolute left-[86px] top-[9px] h-8 w-3" viewBox="0 0 12 32" fill="#5c5c5c" aria-hidden="true">
          <path d="M0 0h12v4L7 9v23H5V9L0 4z" />
        </svg>
      </div>
      <button aria-label="Timeline settings" className="mt-[15px]">
        <Gear className="w-4 h-4 text-[#666]" />
      </button>
    </footer>
  );
}

export default function App() {
  return (
    <div className="flex min-h-screen flex-col bg-white font-['Liberation_Sans',Arial,sans-serif]">
      <TopBar />
      <Ribbon />
      <main className="relative flex flex-1 flex-col justify-between">
        <Model />
        <div className="flex items-start justify-between">
          <Browser />
          <div className="pt-1">
            <ViewCube />
          </div>
        </div>
        <div className="relative grid grid-cols-[300px_1fr_295px] pb-[5px]">
          <div className="flex h-[25px] items-center border border-t-0 border-[#c6c6c6] bg-[#f1f1f1] pl-6 pr-[11px] text-[11px] text-[#555]">
            <h2 className="flex-1">COMMENTS</h2>
            <button aria-label="Expand comments">
              <svg className="w-[9px] h-[9px]" viewBox="0 0 9 9">
                <circle cx="4.500" cy="4.500" r="4.500" fill="#222" />
                <path d="M2 4.500h5M4.500 2v5" stroke="#fff" strokeWidth="1.200" />
              </svg>
            </button>
          </div>
          <div className="flex justify-center">
            <NavBar />
          </div>
        </div>
      </main>
      <Timeline />
    </div>
  );
}
